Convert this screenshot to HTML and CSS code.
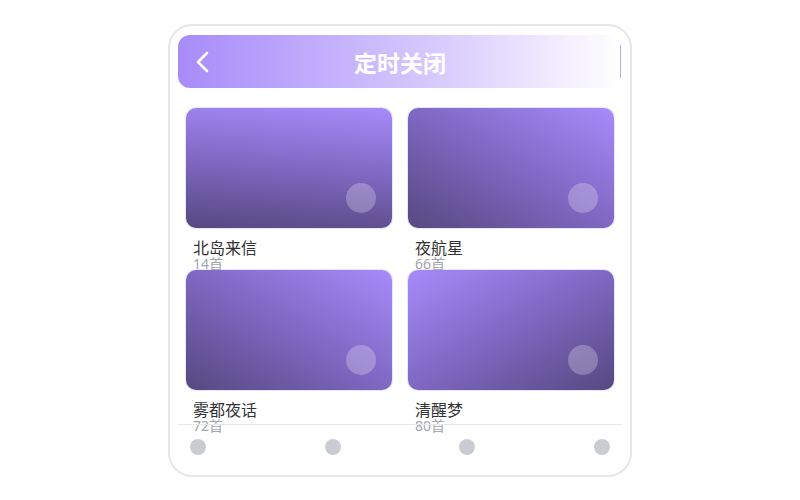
FILE: index.html
```html
<!DOCTYPE html>
<html>
   <head>
      <meta charset="utf-8">
      <title>定时关闭</title>
      <link rel="stylesheet" href="styles.css">
   </head>
   <body>
      <div class="phone">
         <div class="header">
            <span class="back">
               <svg width="16" height="22" viewBox="0 0 16 22"><path d="M12 2 L3 11 L12 20" fill="none" stroke="#fff" stroke-width="2.6" stroke-linecap="round" stroke-linejoin="round"/></svg>
            </span>
            <span class="title">定时关闭</span>
         </div>

         <div class="main">
            <div class="grid">
               <div class="item">
                  <div class="cover c1"><span class="dot"></span></div>
                  <div class="name">北岛来信</div>
                  <div class="count">14首</div>
               </div>
               <div class="item">
                  <div class="cover c2"><span class="dot"></span></div>
                  <div class="name">夜航星</div>
                  <div class="count">66首</div>
               </div>
               <div class="item">
                  <div class="cover c2"><span class="dot"></span></div>
                  <div class="name">雾都夜话</div>
                  <div class="count">72首</div>
               </div>
               <div class="item">
                  <div class="cover c4"><span class="dot"></span></div>
                  <div class="name">清醒梦</div>
                  <div class="count">80首</div>
               </div>
            </div>
         </div>

         <div class="nav">
            <span class="nav-dot"></span>
            <span class="nav-dot"></span>
            <span class="nav-dot"></span>
            <span class="nav-dot"></span>
         </div>
      </div>
   </body>
</html>
```

FILE: styles.css
```css
body {
    margin: 0;
    padding: 24px 0 0;
    background: #fff;
    font-family: "Noto Sans", "Noto Sans CJK SC", sans-serif;
}
.phone {
    box-sizing: border-box;
    width: 464px;
    height: 453px;
    margin: 0 auto;
    padding: 9px 8px 0;
    border: 2px solid #e5e7eb;
    border-radius: 24px;
    display: flex;
    flex-direction: column;
    overflow: hidden;
}
.header {
    position: relative;
    height: 53px;
    border-radius: 12px;
    background: linear-gradient(to right, #a78bfa, #d9ccfd 60%, #fff);
    display: flex;
    align-items: center;
    justify-content: center;
    flex-shrink: 0;
}
.header::after {
    content: "";
    position: absolute;
    right: 1px;
    top: 10px;
    bottom: 10px;
    width: 1px;
    background: #b9a4fb;
}
.back {
    position: absolute;
    left: 17px;
    top: 16px;
    line-height: 0;
}
.title {
    color: #fff;
    font-size: 23px;
    font-weight: bold;
}
.main {
    height: 316px;
    margin-top: 20px;
    flex-shrink: 0;
}
.grid {
    display: grid;
    grid-template-columns: 206px 206px;
    column-gap: 16px;
    padding: 0 8px;
}
.item {
    height: 162px;
}
.cover {
    position: relative;
    height: 120px;
    border-radius: 10px;
    box-shadow: 0 0 0 1px rgba(196, 181, 253, 0.35);
}
.c1 { background: linear-gradient(185deg, #a78bfa, #7e68c2 50%, #574880); }
.c2 { background: linear-gradient(to bottom left, #a78bfa, #7e68c2 50%, #574880); }
.c4 { background: linear-gradient(to bottom right, #a78bfa, #7e68c2 50%, #574880); }
.dot {
    position: absolute;
    right: 16px;
    bottom: 15px;
    width: 30px;
    height: 30px;
    border-radius: 50%;
    background: rgba(255, 255, 255, 0.25);
}
.name {
    margin-top: 10px;
    padding-left: 7px;
    font-size: 16px;
    line-height: 20px;
    color: #333;
}
.count {
    padding-left: 7px;
    font-size: 14px;
    line-height: 12px;
    color: #a1a6ae;
}
.nav {
    flex: 1;
    border-top: 1px solid #e5e7eb;
    display: flex;
    justify-content: space-between;
    align-items: flex-start;
    padding: 14px 12px 0;
}
.nav-dot {
    width: 16px;
    height: 16px;
    border-radius: 50%;
    background: #c9cdd3;
}
```
